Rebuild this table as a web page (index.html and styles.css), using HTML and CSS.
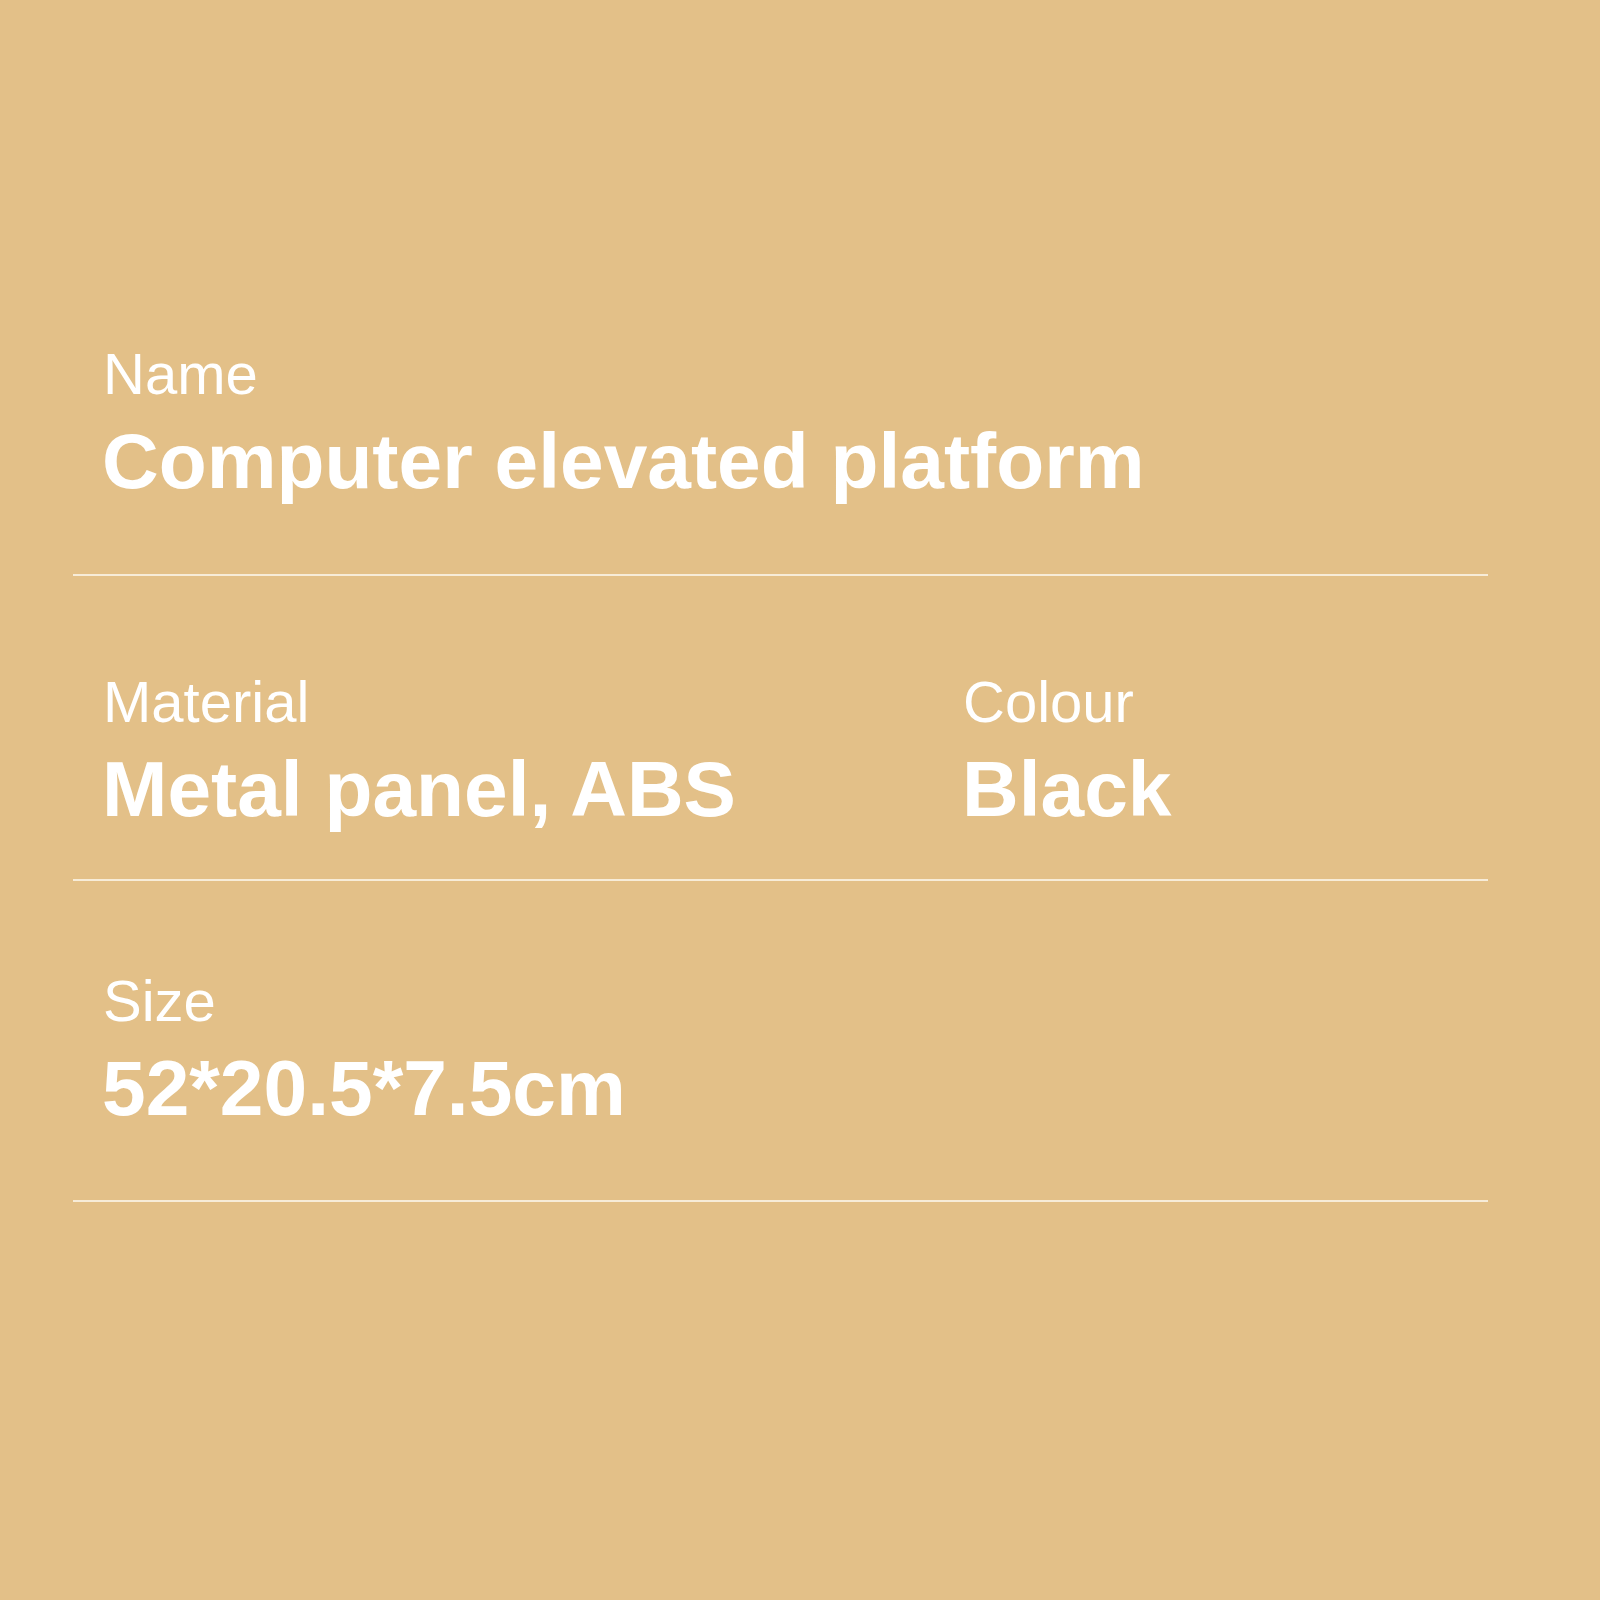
FILE: index.html
```html
<!DOCTYPE html>
<html lang="en">
<head>
<meta charset="utf-8">
<title>Specifications</title>
<link rel="stylesheet" href="styles.css">
</head>
<body>
<main class="sheet">
  <section class="row row-first">
    <div class="field">
      <div class="label">Name</div>
      <div class="value">Computer elevated platform</div>
    </div>
  </section>
  <section class="row row-second two-col">
    <div class="field">
      <div class="label">Material</div>
      <div class="value">Metal panel, ABS</div>
    </div>
    <div class="field">
      <div class="label">Colour</div>
      <div class="value">Black</div>
    </div>
  </section>
  <section class="row row-third">
    <div class="field">
      <div class="label">Size</div>
      <div class="value">52*20.5*7.5cm</div>
    </div>
  </section>
</main>
</body>
</html>
```
FILE: styles.css
```css
html, body {
  margin: 0;
  padding: 0;
}
body {
  background: #e3c088;
  width: 1600px;
  height: 1600px;
  font-family: "Liberation Sans", Arial, sans-serif;
  color: #ffffff;
}
.sheet {
  padding-top: 341px;
  margin-left: 73px;
  width: 1415px;
}
.row {
  border-bottom: 2px solid #f7ecd8;
  padding-left: 29px;
}
.row-first {
  padding-bottom: 68px;
}
.row-second {
  padding-top: 93px;
  padding-bottom: 45px;
}
.row-third {
  padding-top: 87px;
  padding-bottom: 67px;
}
.two-col {
  display: grid;
  grid-template-columns: 860px 1fr;
}
.field {
  display: flex;
  flex-direction: column;
  gap: 9px;
}
.label {
  font-size: 58px;
  line-height: 66px;
  font-weight: 400;
  padding-left: 1px;
}
.value {
  font-size: 78.5px;
  line-height: 90px;
  font-weight: 700;
}
```
